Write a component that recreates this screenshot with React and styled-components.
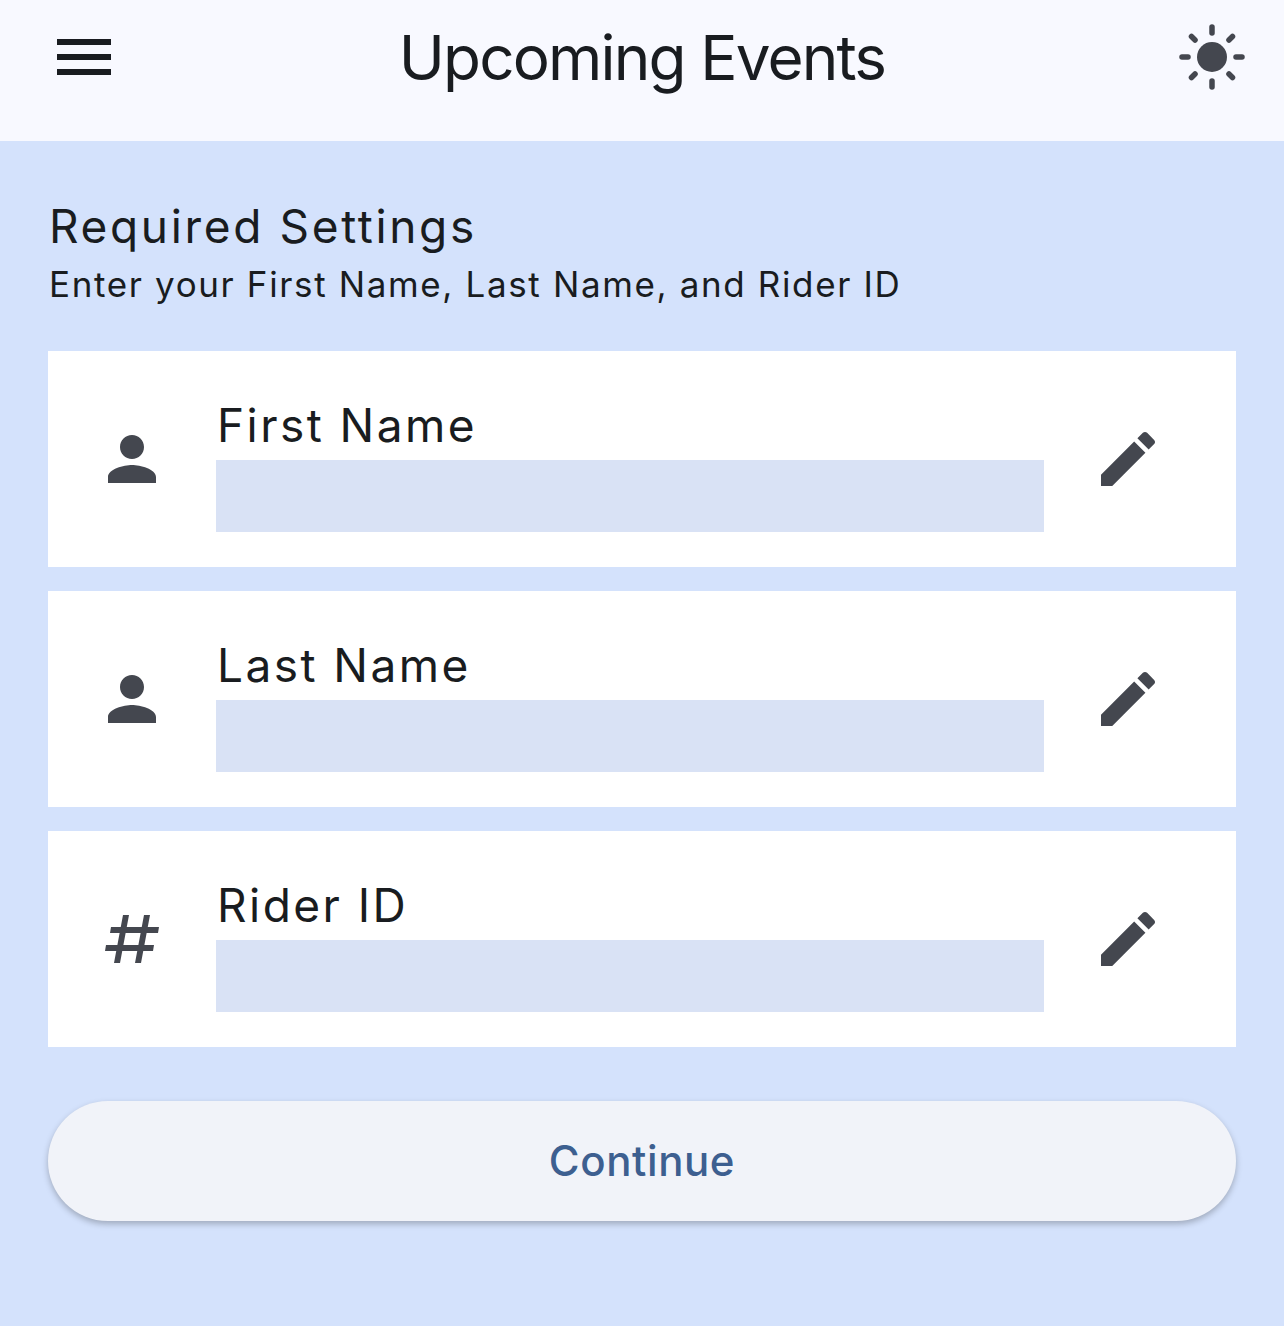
import React from 'react';
import styled, { createGlobalStyle } from 'styled-components';

const GlobalStyle = createGlobalStyle`
  html, body {
    margin: 0;
    padding: 0;
    background: #d4e2fc;
    font-family: "Inter", "Roboto", sans-serif;
  }
`;

function MenuIcon() {
  return (
    <Svg viewBox="0 0 24 24" $color="#191c20">
      <path d="M3 18h18v-2H3v2zm0-5h18v-2H3v2zm0-7v2h18V6H3z" />
    </Svg>
  );
}

function SunIcon() {
  const rays = [0, 45, 90, 135, 180, 225, 270, 315];
  return (
    <Svg viewBox="0 0 72 72" $color="#44474f">
      <circle cx="36" cy="36" r="15" />
      {rays.map((angle) => (
        <line
          key={angle}
          x1="36"
          y1={angle % 90 === 0 ? 6 : 7}
          x2="36"
          y2={angle % 90 === 0 ? 12 : 12}
          stroke="#44474f"
          strokeWidth="5.5"
          strokeLinecap="round"
          transform={`rotate(${angle} 36 36)`}
        />
      ))}
    </Svg>
  );
}

function PersonIcon() {
  return (
    <Svg viewBox="0 0 24 24" $color="#44474f">
      <path d="M12 12c2.21 0 4-1.79 4-4s-1.79-4-4-4-4 1.79-4 4 1.79 4 4 4zm0 2c-2.67 0-8 1.34-8 4v2h16v-2c0-2.66-5.33-4-8-4z" />
    </Svg>
  );
}

function HashIcon() {
  return (
    <Svg viewBox="0 0 72 72" $color="#44474f">
      <path d="M15 24h48l-1 6H14zM10 42h48l-1 6H9zM27 12h6l-9 48h-6zM48 12h6l-9 48h-6z" />
    </Svg>
  );
}

function EditIcon() {
  return (
    <Svg viewBox="0 0 24 24" $color="#44474f">
      <path d="M3 17.25V21h3.75L17.81 9.94l-3.75-3.75L3 17.25zM20.71 7.04c.39-.39.39-1.02 0-1.41l-2.34-2.34c-.39-.39-1.02-.39-1.41 0l-1.83 1.83 3.75 3.75 1.83-1.83z" />
    </Svg>
  );
}

const fields = [
  { label: 'First Name', icon: <PersonIcon /> },
  { label: 'Last Name', icon: <PersonIcon /> },
  { label: 'Rider ID', icon: <HashIcon /> },
];

export default function App() {
  return (
    <>
      <GlobalStyle />
      <Page>
        <Header>
          <MenuSlot>
            <MenuIcon />
          </MenuSlot>
          <Title>Upcoming Events</Title>
          <ThemeSlot>
            <SunIcon />
          </ThemeSlot>
        </Header>
        <Main>
          <Heading>Required Settings</Heading>
          <Subheading>Enter your First Name, Last Name, and Rider ID</Subheading>
          <CardList>
            {fields.map((field) => (
              <Card key={field.label}>
                {field.icon}
                <FieldColumn>
                  <Label>{field.label}</Label>
                  <Input />
                </FieldColumn>
                <EditIcon />
              </Card>
            ))}
          </CardList>
          <ContinueButton>Continue</ContinueButton>
        </Main>
      </Page>
    </>
  );
}

const Page = styled.div`
  width: 1284px;
  height: 1326px;
  overflow: hidden;
  background: #d4e2fc;
`;

const Header = styled.header`
  height: 141px;
  box-sizing: border-box;
  padding: 21px 36px 48px;
  display: grid;
  grid-template-columns: 1fr auto 1fr;
  align-items: center;
  background: #f8f9ff;
`;

const MenuSlot = styled.div`
  justify-self: start;
  display: flex;
  padding-left: 12px;
`;

const ThemeSlot = styled.div`
  justify-self: end;
  display: flex;
`;

const Svg = styled.svg`
  width: 72px;
  height: 72px;
  flex: none;
  fill: ${(p) => p.$color};
`;

const Title = styled.h1`
  margin: 0;
  padding-top: 2px;
  font-size: 62px;
  font-weight: 400;
  line-height: 70px;
  letter-spacing: -1.85px;
  color: #191c20;
  white-space: nowrap;
`;

const Main = styled.main`
  padding: 55px 48px 0;
  display: flex;
  flex-direction: column;
`;

const Heading = styled.h2`
  margin: 0;
  padding-left: 1px;
  font-size: 46px;
  font-weight: 400;
  line-height: 60px;
  letter-spacing: 2.65px;
  color: #191c20;
`;

const Subheading = styled.p`
  margin: 0;
  padding-left: 1px;
  font-size: 35px;
  font-weight: 400;
  line-height: 56px;
  letter-spacing: 1.63px;
  color: #191c20;
`;

const CardList = styled.div`
  margin-top: 39px;
  display: flex;
  flex-direction: column;
  gap: 24px;
`;

const Card = styled.div`
  height: 216px;
  box-sizing: border-box;
  padding: 0 72px 0 48px;
  display: flex;
  align-items: center;
  gap: 48px;
  background: #ffffff;
`;

const FieldColumn = styled.div`
  flex: 1;
  align-self: stretch;
  display: flex;
  flex-direction: column;
  justify-content: flex-end;
  padding-bottom: 35px;
`;

const Label = styled.div`
  padding-left: 1px;
  font-size: 46px;
  line-height: 70px;
  letter-spacing: 2.45px;
  color: #191c20;
`;

const Input = styled.div`
  height: 72px;
  background: #d9e2f5;
`;

const ContinueButton = styled.button`
  margin-top: 54px;
  height: 120px;
  padding: 0 0 2px;
  border: none;
  border-radius: 60px;
  background: #f1f3f9;
  box-shadow: 0 3px 6px rgba(0, 0, 0, 0.25);
  font-family: inherit;
  font-size: 42px;
  font-weight: 450;
  letter-spacing: 0.6px;
  color: #3d5f90;
`;
